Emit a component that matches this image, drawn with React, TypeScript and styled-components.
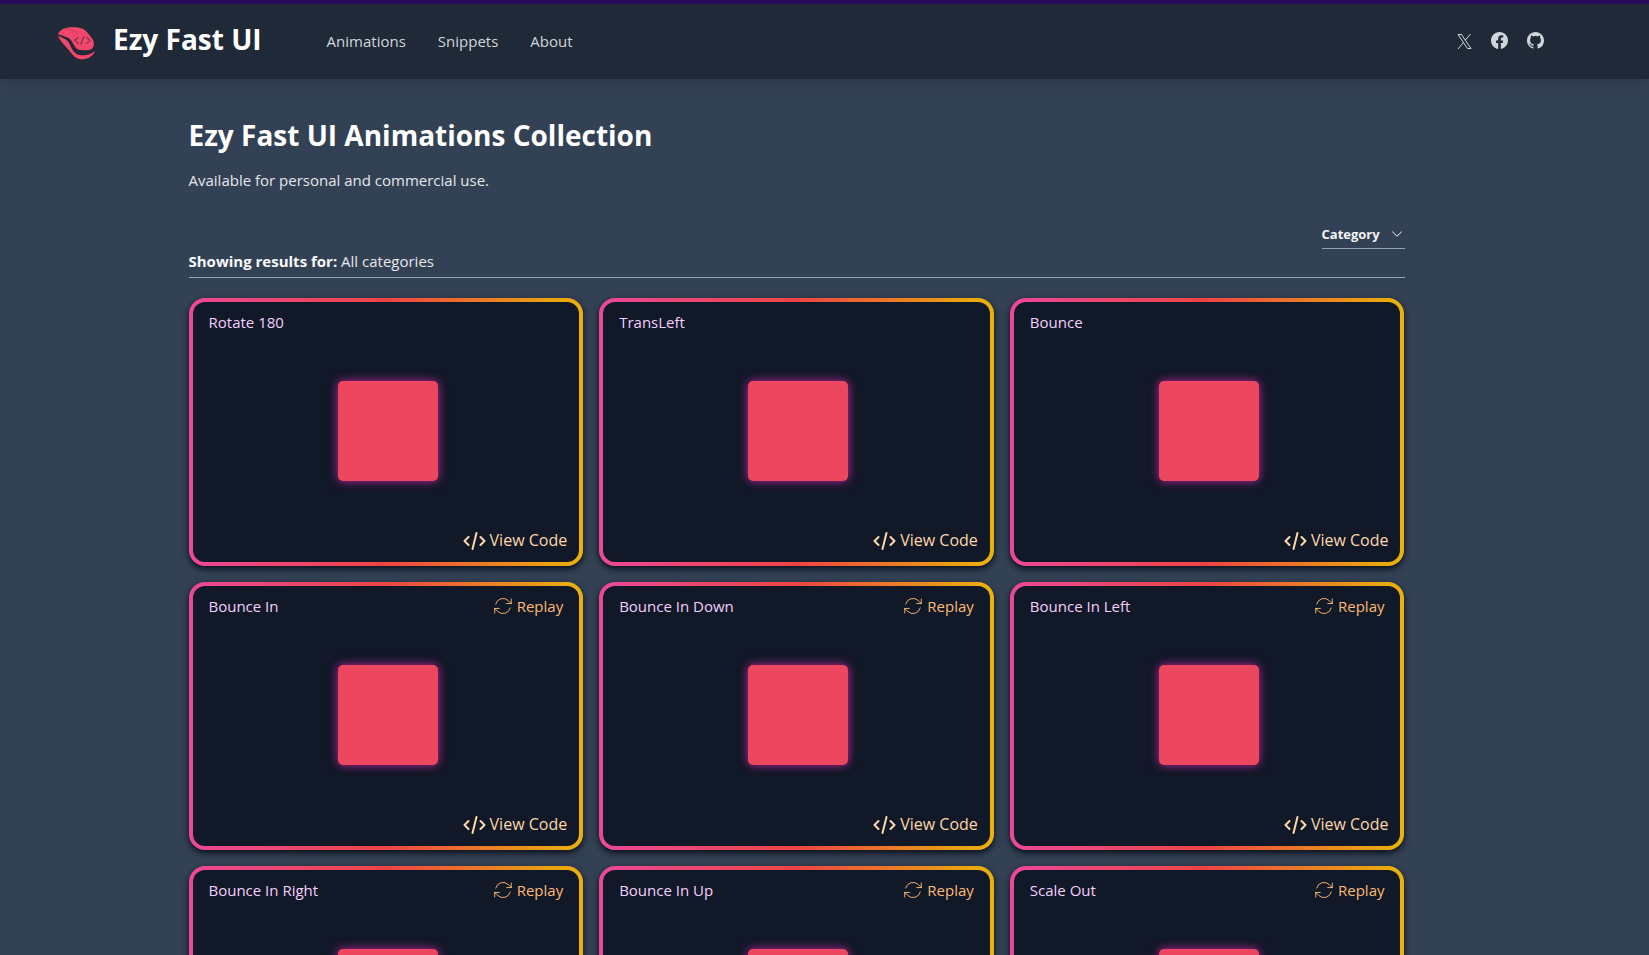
import React from "react";
import styled, { createGlobalStyle } from "styled-components";
import { BsFacebook, BsGithub, BsChevronDown } from "react-icons/bs";

const GlobalStyle = createGlobalStyle`
  * { box-sizing: border-box; }
  body {
    margin: 0;
    background: #334155;
    color: #e5e7eb;
    font-family: "Segoe UI", "Open Sans", "Noto Sans", sans-serif;
    font-size: 15px;
    line-height: 24px;
  }
`;

const Header = styled.header`
  display: flex;
  align-items: center;
  height: 79px;
  padding: 0 105px 2px 56px;
  background: #1f2937;
  border-top: 4px solid #2a0a5a;
  box-shadow: 0 10px 15px -3px rgba(0, 0, 0, 0.1), 0 4px 6px -4px rgba(0, 0, 0, 0.1);
`;

const Brand = styled.a`
  display: flex;
  align-items: center;
  gap: 16px;
  color: #fff;
  text-decoration: none;
  font-size: 28px;
  font-weight: 700;
  line-height: 36px;
`;

const BrandName = styled.span`
  padding-bottom: 4px;
`;

const Nav = styled.nav`
  display: flex;
  gap: 32px;
  margin-left: 65px;
`;

const NavLink = styled.a`
  color: #d1d5db;
  text-decoration: none;
`;

const Social = styled.div`
  display: flex;
  align-items: center;
  gap: 19px;
  margin-left: auto;
`;

const SocialLink = styled.a`
  display: flex;
  color: #d1d5db;
`;

const Main = styled.main`
  padding: 38px 56px 0 0;
`;

const Container = styled.div`
  max-width: 1216px;
  margin: 0 auto;
`;

const Title = styled.h1`
  margin: 0;
  color: #fff;
  font-size: 28px;
  font-weight: 700;
  line-height: 36px;
`;

const Lead = styled.p`
  margin: 15px 0 0;
`;

const Filters = styled.div`
  display: flex;
  justify-content: flex-end;
  margin-top: 29px;
`;

const CategoryButton = styled.button`
  display: flex;
  align-items: center;
  justify-content: space-between;
  width: 83px;
  height: 28px;
  padding: 0 2px 2px 0;
  border: 0;
  border-bottom: 1px solid #94a3b8;
  background: none;
  color: #f3f4f6;
  font: inherit;
  font-size: 13px;
  font-weight: 700;
`;

const Results = styled.p`
  margin: 0 0 20px;
  padding-bottom: 4px;
  border-bottom: 1px solid #94a3b8;
`;

const ResultsLabel = styled.strong`
  color: #f9fafb;
`;

const Grid = styled.div`
  display: grid;
  grid-template-columns: repeat(3, 1fr);
  gap: 16px;
`;

const Card = styled.article`
  padding: 4px;
  border-radius: 16px;
  background: linear-gradient(to right, #ec4899, #ef4444, #eab308);
  box-shadow: 0 3px 6px #0b0f19;
`;

const CardBody = styled.div`
  display: flex;
  flex-direction: column;
  justify-content: space-between;
  align-items: center;
  height: 260px;
  padding: 8px 12px 10px 16px;
  border-radius: 12px;
  background: #111827;
`;

const CardRow = styled.div<{ $end?: boolean }>`
  display: flex;
  align-self: stretch;
  justify-content: ${(p) => (p.$end ? "flex-end" : "space-between")};
`;

const CardTitle = styled.h2`
  margin: 0;
  color: #f5d0fe;
  font-size: 15px;
  font-weight: 400;
`;

const CardButton = styled.button<{ $replay?: boolean }>`
  display: flex;
  align-items: center;
  gap: ${(p) => (p.$replay ? "3px" : "4px")};
  height: 24px;
  padding: 0;
  margin-right: ${(p) => (p.$replay ? "4px" : "0")};
  border: 0;
  background: none;
  color: ${(p) => (p.$replay ? "#fdba74" : "#fed7aa")};
  font: inherit;
  font-size: ${(p) => (p.$replay ? "15px" : "16px")};
`;

const Square = styled.div`
  width: 100px;
  height: 100px;
  border-radius: 5px;
  background: #ed475f;
  box-shadow: 0 0 10px #c026a0;
`;

const Logo = () => (
  <svg width="41" height="40" viewBox="48 62 123 120" aria-hidden="true">
    <path
      d="M54 102C60 88 76 80 98 81C118 81 131 84 141 95L157 115C164 125 163 139 156 145C149 151 130 151 117 148C106 145 101 133 95 122C88 111 75 109 54 102Z"
      fill="#f2476a"
    />
    <path
      d="M54 106C67 113 80 115 87 127C94 141 99 157 115 163C133 168 151 163 166 152C157 170 140 178 122 177C105 175 98 164 87 150C76 136 61 124 54 106Z"
      fill="#f2476a"
    />
    <path d="M84 83C92 90 104 91 112 99M76 86L86 84" fill="none" stroke="#a3365a" strokeWidth="2" />
    <path
      d="M116 111L103 120L116 130M132 108L122 133M139 111L151 120L139 130"
      fill="none"
      stroke="#4b2e48"
      strokeWidth="3"
    />
  </svg>
);

const XIcon = () => (
  <svg width="15" height="19" viewBox="0 0 15 19" fill="none" stroke="currentColor" aria-hidden="true">
    <path d="M1 3.500H4.500L14 17.500H10.500ZM13.500 3L8.300 9.200M6.500 11.300L1 18" />
  </svg>
);

const CodeIcon = () => (
  <svg
    width="23"
    height="20"
    viewBox="0 0 23 20"
    fill="none"
    stroke="currentColor"
    strokeWidth="2"
    strokeLinecap="round"
    strokeLinejoin="round"
    aria-hidden="true"
  >
    <path d="M5.500 7L1.500 11L5.500 15M17.500 7L21.500 11L17.500 15M13.500 3L9.500 19" />
  </svg>
);

const ReplayIcon = () => (
  <svg
    width="22"
    height="22"
    viewBox="0 0 24 24"
    fill="none"
    stroke="currentColor"
    strokeLinecap="round"
    strokeLinejoin="round"
    aria-hidden="true"
  >
    <path d="M16.023 9.348h4.992v-.001M2.985 19.644v-4.992m0 0h4.992m-4.993 0 3.181 3.183a8.250 8.250 0 0 0 13.803-3.700M4.031 9.865a8.250 8.250 0 0 1 13.803-3.700l3.181 3.182m0-4.991v4.990" />
  </svg>
);

const animations = [
  { name: "Rotate 180", replay: false },
  { name: "TransLeft", replay: false },
  { name: "Bounce", replay: false },
  { name: "Bounce In", replay: true },
  { name: "Bounce In Down", replay: true },
  { name: "Bounce In Left", replay: true },
  { name: "Bounce In Right", replay: true },
  { name: "Bounce In Up", replay: true },
  { name: "Scale Out", replay: true },
];

export default function App() {
  return (
    <>
      <GlobalStyle />
      <Header>
        <Brand href="#">
          <Logo />
          <BrandName>Ezy Fast UI</BrandName>
        </Brand>
        <Nav>
          <NavLink href="#animations">Animations</NavLink>
          <NavLink href="#snippets">Snippets</NavLink>
          <NavLink href="#about">About</NavLink>
        </Nav>
        <Social>
          <SocialLink href="#x" aria-label="X">
            <XIcon />
          </SocialLink>
          <SocialLink href="#facebook" aria-label="Facebook">
            <BsFacebook size={17} />
          </SocialLink>
          <SocialLink href="#github" aria-label="GitHub">
            <BsGithub size={17} />
          </SocialLink>
        </Social>
      </Header>
      <Main>
        <Container>
          <Title>Ezy Fast UI Animations Collection</Title>
          <Lead>Available for personal and commercial use.</Lead>
          <Filters>
            <CategoryButton>
              Category <BsChevronDown size={12} />
            </CategoryButton>
          </Filters>
          <Results>
            <ResultsLabel>Showing results for:</ResultsLabel> All categories
          </Results>
          <Grid>
            {animations.map((a) => (
              <Card key={a.name}>
                <CardBody>
                  <CardRow>
                    <CardTitle>{a.name}</CardTitle>
                    {a.replay && (
                      <CardButton $replay>
                        <ReplayIcon />
                        Replay
                      </CardButton>
                    )}
                  </CardRow>
                  <Square />
                  <CardRow $end>
                    <CardButton>
                      <CodeIcon />
                      View Code
                    </CardButton>
                  </CardRow>
                </CardBody>
              </Card>
            ))}
          </Grid>
        </Container>
      </Main>
    </>
  );
}
